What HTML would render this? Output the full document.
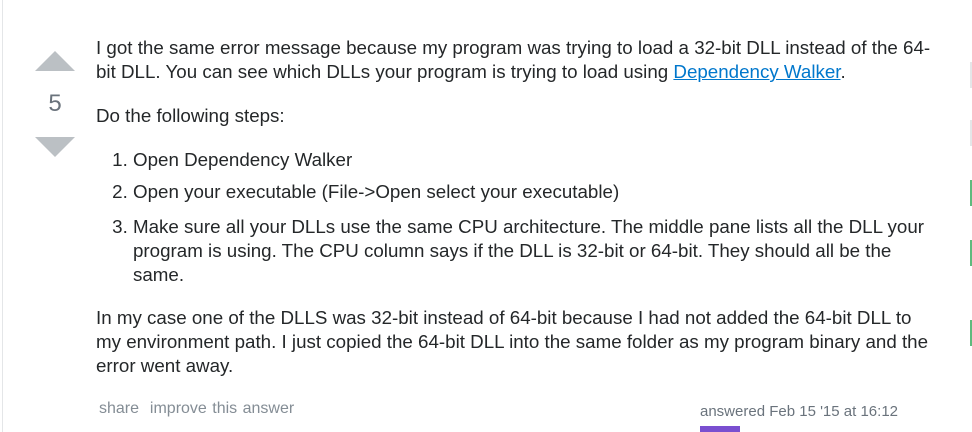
<!DOCTYPE html>
<html><head><style>
body{margin:0;width:972px;height:432px;background:#fff;overflow:hidden;position:relative;font-family:"Liberation Sans",Arial,sans-serif;color:#242729;}
.bl{position:absolute;left:2px;top:0;width:1px;height:432px;background:#e4e6e8}
.up{position:absolute;left:35px;top:51px;width:0;height:0;border-left:20px solid transparent;border-right:20px solid transparent;border-bottom:20px solid #bbc0c4}
.dn{position:absolute;left:35px;top:137px;width:0;height:0;border-left:20px solid transparent;border-right:20px solid transparent;border-top:20px solid #bbc0c4}
.v{position:absolute;left:36px;top:90px;width:38px;text-align:center;font-size:24px;color:#6a737c}
.t{position:absolute;left:96px;top:36px;width:842px;font-size:18.75px;line-height:24px}
p{margin:0 0 20px 0}
ol{margin:0 0 19px 0;padding-left:37px}
li{margin-bottom:9px}
a{color:#0077cc}
.s{position:absolute;left:99px;top:400px;font-size:16px;color:#848d95;word-spacing:1px}
.an{position:absolute;left:700px;top:403px;font-size:15px;color:#6a737c}
.av{position:absolute;left:700px;top:426px;width:40px;height:6px;background:#7a4fd0}
.m{position:absolute;left:970px;width:2px;height:26px;background:#5eba7d}
</style></head><body>
<div class="bl"></div>
<div class="up"></div><div class="v">5</div><div class="dn"></div>
<div class="t">
<p>I got the same error message because my program was trying to load a 32-bit DLL instead of the 64-bit DLL. You can see which DLLs your program is trying to load using <a href="#">Dependency Walker</a>.</p>
<p>Do the following steps:</p>
<ol>
<li style="margin-bottom:8px">Open Dependency Walker</li>
<li style="margin-bottom:11px">Open your executable (File-&gt;Open select your executable)</li>
<li>Make sure all your DLLs use the same CPU architecture. The middle pane lists all the DLL your program is using. The CPU column says if the DLL is 32-bit or 64-bit. They should all be the same.</li>
</ol>
<p>In my case one of the DLLS was 32-bit instead of 64-bit because I had not added the 64-bit DLL to my environment path. I just copied the 64-bit DLL into the same folder as my program binary and the error went away.</p>
</div>
<div class="s">share &nbsp;improve this answer</div>
<div class="an">answered Feb 15 '15 at 16:12</div>
<div class="av"></div>
<div class="m" style="top:62px;background:#e4e6e8"></div>
<div class="m" style="top:120px;background:#e4e6e8"></div>
<div class="m" style="top:180px"></div>
<div class="m" style="top:240px"></div>
<div class="m" style="top:320px"></div>
</body></html>
